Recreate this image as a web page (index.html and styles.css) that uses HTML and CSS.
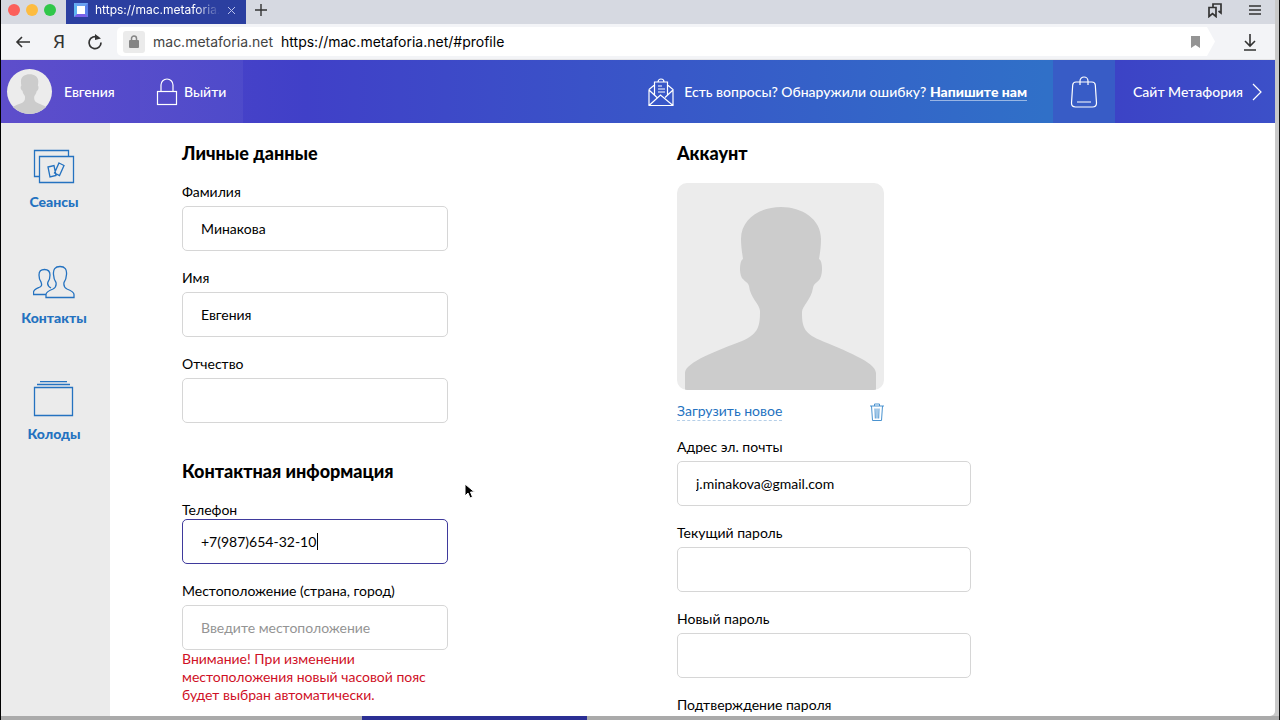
FILE: index.html
```html
<!DOCTYPE html>
<html lang="ru">
<head>
<meta charset="utf-8">
<title>Профиль</title>
<link rel="stylesheet" href="styles.css">
</head>
<body>
<svg class="defs" width="0" height="0" aria-hidden="true">
  <symbol id="person" viewBox="0 0 207 207">
    <path d="M104 24C83 24 64 36 64 56c0 7 1 13 2 20c-4 2-4 17 0 20c2 3 5 3 6 7c1 11 11 19 11 25c0 14-1 23-18 30C42 167 8 179 8 190V207H199V190c0-11-33-23-56-33c-17-7-18-15-18-28c0-6 9-12 11-24c1-5 4-5 6-8c4-4 4-19 0-21c1-6 2-12 2-20C144 36 125 24 104 24Z"/>
  </symbol>
</svg>
<div class="window">
  <div class="tabbar">
    <div class="lights"><i class="light light--red"></i><i class="light light--amber"></i><i class="light light--green"></i></div>
    <div class="tab">
      <span class="favicon"></span>
      <span class="tab__title">https://mac.metaforia.n</span>
      <button class="tab__close" aria-label="Закрыть"><svg width="9" height="9" viewBox="0 0 9 9"><path d="M1 1l7 7M8 1L1 8"/></svg></button>
    </div>
    <button class="icon-btn" aria-label="Новая вкладка"><svg width="14" height="14" viewBox="0 0 14 14"><path d="M7 1v12M1 7h12" stroke-width="1.4"/></svg></button>
    <div class="tabbar__right">
      <button class="icon-btn" aria-label="Закладки"><svg width="16" height="16" viewBox="0 0 16 16"><path d="M2 5.500h7v9l-3.500-3-3.500 3zM6 5.500V2h8v9l-2.500-2" stroke-width="1.700"/></svg></button>
      <button class="icon-btn" aria-label="Меню"><svg width="14" height="12" viewBox="0 0 14 12"><path d="M1 2h12M1 6h12M1 10h12" stroke-width="1.600"/></svg></button>
    </div>
  </div>
  <div class="toolbar">
    <div class="toolbar__nav">
      <button class="icon-btn" aria-label="Назад"><svg width="16" height="14" viewBox="0 0 16 14"><path d="M7 2L2 7l5 5M2 7h13" stroke-width="1.600"/></svg></button>
      <button class="icon-btn ya" aria-label="Яндекс">Я</button>
      <button class="icon-btn" aria-label="Обновить"><svg width="16" height="18" viewBox="0 0 16 18"><path d="M14 9.500A6 6 0 1 1 11 4.500" stroke-width="1.700"/><path d="M8 1l6 4.500-6 1.500z" fill="#333" stroke="none"/></svg></button>
    </div>
    <div class="address">
      <span class="address__lock"><svg width="10" height="13" viewBox="0 0 10 13"><rect x="0" y="5" width="10" height="8" rx="1" fill="#858585"/><path d="M2.500 6V3.500a2.500 2.500 0 0 1 5 0V6" fill="none" stroke="#858585" stroke-width="1.500"/></svg></span>
      <span class="address__host">mac.metaforia.net</span>
      <span class="address__url">https://mac.metaforia.net/#profile</span>
      <svg class="address__mark" width="9" height="12" viewBox="0 0 9 12"><path d="M0 0h9v12L4.500 9 0 12z" fill="#949494"/></svg>
    </div>
    <button class="icon-btn download" aria-label="Загрузки"><svg width="14" height="18" viewBox="0 0 14 18"><path d="M7 1v11M2 8l5 5 5-5M1 17h12" stroke-width="1.600"/></svg></button>
  </div>

  <header class="header">
    <a class="user" href="#profile"><svg class="user__pic" viewBox="0 0 207 207"><use href="#person"/></svg>Евгения</a>
    <a class="logout" href="#logout"><svg class="line" width="22" height="28" viewBox="0 0 22 28"><rect x="1.500" y="13.500" width="19" height="13"/><path d="M5 13.500V7a6 6 0 0 1 12 0v6.500"/></svg>Выйти</a>
    <div class="ask">
      <svg class="line" width="26" height="30" viewBox="0 0 26 30"><path d="M1 12.500v16h24v-16l-6-5M1 12.500l6-5M1 28.500l11.500-10.500L25 28.500M1 13l8 7.500M25 13l-8 7.500M6.500 18V5h13v13M10 5a3 3 0 0 1 6 0M10 9h4M10 12h7M10 15h7"/></svg>
      <span>Есть вопросы? Обнаружили ошибку? <a href="#write">Напишите нам</a></span>
    </div>
    <a class="bag" href="#cart" aria-label="Корзина"><svg class="line" width="28" height="34" viewBox="0 0 28 34"><path d="M6 7h16q3 0 3.300 3l1.200 18q0 4-4 4H5.500q-4 0-4-4L2.700 10Q3 7 6 7ZM10 10V6a4 4 0 0 1 8 0v4M7 27h14"/></svg></a>
    <a class="site" href="#site">Сайт Метафория<svg class="line" width="12" height="18" viewBox="0 0 12 18"><path d="M2 1l8 8-8 8"/></svg></a>
  </header>

  <div class="page">
    <nav class="side">
      <a href="#sessions"><svg width="42" height="36" viewBox="0 0 42 36"><path d="M6 27.500H1.500v-26h34V7M6.500 7.500h34v26h-34zM15 18l6-1.500 2 10-6 1.500zM26 14l5 2.500-4.500 10-5-2.500z"/></svg>Сеансы</a>
      <a href="#contacts"><svg width="42" height="36" viewBox="0 0 42 36"><path d="M27 1.500c-5 0-7 3-6.500 8 .2 4 1 6 2.500 8 .5 3 .3 5-3 6.500-4 1.500-7 3-7 5.500v3h28v-3c0-2.500-3-4-7-5.500-3.300-1.500-3.500-3.500-3-6.500 1.500-2 2.300-4 2.500-8C34 4.500 32 1.500 27 1.500ZM12.500 29.500H0.500v-2c0-3 3-4 5.500-5 3-1 3-3 2-5.500C6.500 15 6 13 6 10c0-4 2-5.500 5.500-5.500S17 6 17 10c0 3-.5 5-2 7-1 2.500-.5 4 3 6"/></svg>Контакты</a>
      <a href="#decks"><svg width="42" height="36" viewBox="0 0 42 36"><path d="M1.500 6.500h38v28h-38zM4 3.500h33M7 0.700h27"/></svg>Колоды</a>
    </nav>
    <main class="content">
      <form class="column">
        <h2>Личные данные</h2>
        <div class="field"><label for="surname">Фамилия</label><input id="surname" type="text" value="Минакова"></div>
        <div class="field"><label for="name">Имя</label><input id="name" type="text" value="Евгения"></div>
        <div class="field"><label for="patronymic">Отчество</label><input id="patronymic" type="text"></div>
        <h2 class="next-title">Контактная информация</h2>
        <div class="field field--active"><label for="phone">Телефон</label><input id="phone" type="tel" value="+7(987)654-32-10"><span class="caret"></span></div>
        <div class="field"><label for="place">Местоположение (страна, город)</label><input id="place" type="text" placeholder="Введите местоположение">
          <p class="warning">Внимание! При изменении местоположения новый часовой пояс будет выбран автоматически.</p></div>
      </form>
      <form class="column column--wide">
        <h2>Аккаунт</h2>
        <svg class="photo" viewBox="0 0 207 207" role="img" aria-label="Фото профиля"><use href="#person"/></svg>
        <div class="photo-actions">
          <a href="#upload">Загрузить новое</a>
          <button type="button" aria-label="Удалить фото"><svg width="14" height="18" viewBox="0 0 14 18"><path d="M0 3h14M4.500 3V1h5v2M1.500 3l1 14.500h9l1-14.500M5 5.500l.3 10M7 5.500v10M9 5.500l-.3 10"/></svg></button>
        </div>
        <div class="field"><label for="email">Адрес эл. почты</label><input id="email" type="email" value="j.minakova@gmail.com"></div>
        <div class="field"><label for="current">Текущий пароль</label><input id="current" type="password"></div>
        <div class="field"><label for="new">Новый пароль</label><input id="new" type="password"></div>
        <div class="field"><label for="confirm">Подтверждение пароля</label><input id="confirm" type="password"></div>
      </form>
    </main>
  </div>
</div>
<div class="desktop"><span></span></div>
<svg class="cursor" width="12" height="17" viewBox="0 0 12 17"><path d="M1 1v12l3-3 2 5 2.500-1-2-5h4z" fill="#000" stroke="#fff" stroke-width="1"/></svg>
</body>
</html>
```
FILE: styles.css
```css
* { box-sizing: border-box; }
body {
  margin: 0;
  height: 100vh;
  overflow: hidden;
  display: flex;
  flex-direction: column;
  background: #c9c9c9;
  border-left: 1px solid #000;
  border-right: 1px solid #111;
  font: 14px/18px Lato, sans-serif;
  color: #000;
}
.defs { position: absolute; }
a { color: inherit; text-decoration: none; }
button { padding: 0; border: 0; background: none; font: inherit; }
svg { display: block; flex: none; }

.window {
  flex: 1;
  min-height: 0;
  margin-right: 4px;
  display: flex;
  flex-direction: column;
  overflow: hidden;
  background: #fff;
  border-radius: 0 0 5px 0;
}
.tabbar {
  flex: none;
  height: 24px;
  display: flex;
  align-items: center;
  padding: 0 13px 4px 7px;
  background: #d6d9e1;
}
.lights { display: flex; gap: 6px; width: 58px; }
.light { width: 12px; height: 12px; border-radius: 50%; }
.light--red { background: #fc605b; }
.light--amber { background: #fdbc40; }
.light--green { background: #2fc74a; }
.tab {
  width: 180px;
  height: 24px;
  margin: 0 8px -4px 0;
  padding: 0 10px 4px 8px;
  display: flex;
  align-items: center;
  gap: 7px;
  background: #2b3fa0;
  color: #fff;
  font: 12px/18px Inter, sans-serif;
}
.favicon {
  flex: none;
  width: 14px;
  height: 14px;
  border: 3px solid;
  border-color: #6aa2f0 #5a80ea #7a5fe8 #5fb4f0;
  background: #fff;
}
.tab__title {
  flex: 1;
  min-width: 0;
  white-space: nowrap;
  -webkit-mask-image: linear-gradient(90deg, #000 80%, transparent);
  mask-image: linear-gradient(90deg, #000 80%, transparent);
}
.tab__close svg { fill: none; stroke: #b9c2ee; }
.icon-btn svg { fill: none; stroke: #333; }
.tabbar__right { margin-left: auto; display: flex; align-items: center; gap: 25px; }
.toolbar {
  flex: none;
  height: 36px;
  display: flex;
  align-items: center;
  padding: 0 18px 0 14px;
  background: #f3f4f7;
  border-bottom: 1px solid #e4e4e6;
}
.toolbar__nav { display: flex; align-items: center; justify-content: space-between; width: 88px; }
.ya { font: 19px/20px Roboto, sans-serif; color: #333; }
.address {
  flex: 1;
  height: 29px;
  margin: 0 28px 0 14px;
  padding: 0 15px 0 6px;
  display: flex;
  align-items: center;
  background: #fff;
  border-radius: 5px;
  clip-path: polygon(0 0, calc(100% - 8px) 0, 100% 50%, calc(100% - 8px) 100%, 0 100%);
  font: 14px/18px Inter, sans-serif;
}
.address__lock {
  width: 22px;
  height: 22px;
  display: grid;
  place-items: center;
  border-radius: 3px;
  background: #ebebeb;
}
.address__host { margin: 0 8px; color: #444; }
.address__mark { margin-left: auto; }

.header {
  flex: none;
  height: 63px;
  display: flex;
  align-items: stretch;
  background: linear-gradient(90deg, #5847c9 0, #4040c8 24%, #3070c8 82%);
  color: #fff;
  font-weight: 500;
}
.header > * { display: flex; align-items: center; }
.line { fill: none; stroke: #fff; stroke-width: 1.2; }
.user { width: 139px; padding-left: 6px; gap: 12px; background: rgba(255, 255, 255, 0.04); }
.user__pic { width: 45px; height: 45px; border-radius: 50%; background: #ececec; fill: #ccc; }
.logout { width: 103px; padding-left: 16px; gap: 6px; background: rgba(255, 255, 255, 0.05); }
.ask { margin-left: auto; padding-right: 26px; gap: 10px; }
.ask a { font-weight: 900; border-bottom: 1px solid rgba(255, 255, 255, 0.5); }
.bag { width: 62px; justify-content: center; background: #385cc6; }
.site { width: 160px; justify-content: space-between; padding: 0 12px 0 18px; background: linear-gradient(90deg, #3c43c6, #3c50c8); }

.page { flex: 1; min-height: 0; display: flex; }
.side {
  width: 109px;
  padding: 26px 3px 0 0;
  display: flex;
  flex-direction: column;
  gap: 54px;
  background: #ebebeb;
  color: #2472c0;
  font-weight: 900;
}
.side a { display: flex; flex-direction: column; align-items: center; gap: 8px; }
.side svg { fill: none; stroke: #2472c0; stroke-width: 1.3; }
.content {
  flex: 1;
  min-width: 0;
  display: grid;
  grid-template-columns: 1fr 1fr;
  align-items: start;
  padding: 18px 103px 0 72px;
}
.column { width: 266px; }
.column--wide { width: 294px; }
h2 { margin: 0 0 18px; font-size: 18px; line-height: 24px; font-weight: 900; }
.next-title { margin-top: 36px; }
.field { position: relative; margin-bottom: 18px; }
.field label { display: block; margin-bottom: 5px; }
.field input {
  display: block;
  width: 100%;
  height: 45px;
  padding: 0 18px;
  border: 1px solid #d6d6d6;
  border-radius: 5px;
  background: #fff;
  font: inherit;
  color: #000;
}
.field input::placeholder { color: #949494; opacity: 1; }
.field .warning { margin: 0; color: #cf1026; }
.field--active label { margin-bottom: 0; }
.field--active input { border-color: #3f3a9c; }
.caret { position: absolute; left: 135px; top: 32px; width: 1px; height: 17px; background: #000; }
.photo { width: 207px; height: 207px; border-radius: 10px; background: #ececec; fill: #ccc; }
.photo-actions {
  width: 207px;
  margin: 12px 0 17px;
  display: flex;
  align-items: center;
  justify-content: space-between;
}
.photo-actions a { color: #2472c0; border-bottom: 1px dashed #b5cfe8; }
.photo-actions svg { fill: none; stroke: #4a93d0; }

.desktop { flex: none; height: 4px; background: #aaa; }
.desktop span { display: block; width: 225px; height: 4px; margin-left: 361px; background: #2b2f94; }
.cursor { position: absolute; left: 464px; top: 483px; }
```
